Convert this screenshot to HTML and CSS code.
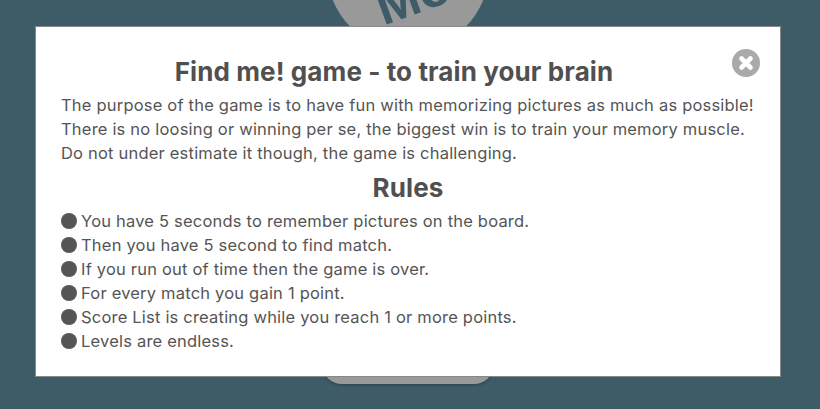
FILE: index.html
```html
<!DOCTYPE html>
<html lang="en">
<head>
  <meta charset="UTF-8" />
  <meta name="viewport" content="width=device-width, initial-scale=1.0"/>
  <title>Find me! game</title>
  <link rel="stylesheet" href="styles.css">
</head>
<body>

<div class="page">
  <div class="logo"><span class="logo-text">Mo</span></div>
  <div class="start-btn"></div>
</div>

<div class="overlay">
  <div class="modal">
    <svg class="close" viewBox="0 0 28 28" aria-label="Close">
      <circle cx="14" cy="14" r="14" fill="#aaaaaa"/>
      <path d="M9.5 9.5L18.500 18.500M18.500 9.500L9.500 18.500" stroke="#fff" stroke-width="4.6" stroke-linecap="round"/>
    </svg>

    <h2 class="title">Find me! game - to train your brain</h2>
    <p>The purpose of the game is to have fun with memorizing pictures as much as possible!<br>
    There is no loosing or winning per se, the biggest win is to train your memory muscle.<br>
    Do not under estimate it though, the game is challenging.</p>

    <h2 class="rules-title">Rules</h2>
    <ul class="rules">
      <li>You have 5 seconds to remember pictures on the board.</li>
      <li>Then you have 5 second to find match.</li>
      <li>If you run out of time then the game is over.</li>
      <li>For every match you gain 1 point.</li>
      <li>Score List is creating while you reach 1 or more points.</li>
      <li>Levels are endless.</li>
    </ul>
  </div>
</div>

</body>
</html>
```

FILE: styles.css
```css
html, body {
  height: 100%;
}

body {
  margin: 0;
  font-family: Inter, "Noto Sans", sans-serif;
  background: #3d5c68;
  color: #555;
  overflow: hidden;
}

.page {
  height: 409px;
  display: flex;
  flex-direction: column;
  align-items: center;
  overflow: hidden;
}

.logo {
  flex: none;
  width: 162px;
  height: 162px;
  margin-top: -111px;
  margin-left: -4px;
  border-radius: 50%;
  background: #999;
  display: flex;
  align-items: center;
  justify-content: center;
  overflow: hidden;
}

.logo-text {
  font-family: "Liberation Sans", sans-serif;
  font-weight: 700;
  font-size: 52px;
  color: #3d5c68;
  transform: translate(5px, 26px) rotate(-20deg);
}

.start-btn {
  flex: none;
  width: 172px;
  height: 50px;
  margin-top: 283px;
  margin-left: -4px;
  border-radius: 20px;
  background: #999;
  box-shadow: 0 1px 3px rgba(0, 0, 0, 0.3);
}

.overlay {
  position: fixed;
  top: 0;
  left: 0;
  right: 0;
  bottom: 0;
}

.modal {
  position: relative;
  box-sizing: border-box;
  width: 746px;
  height: 351px;
  margin: 26px 0 0 35px;
  padding: 29px 25px 0;
  background: #fff;
  border: 1px solid #888;
}

.close {
  position: absolute;
  top: 22px;
  right: 20px;
  width: 28px;
  height: 28px;
}

h2 {
  margin: 0;
  text-align: center;
  font-size: 26px;
  line-height: 32px;
  font-weight: 700;
  letter-spacing: 0.1px;
  color: #505050;
}

/* leaves room for the close button, so the title sits left of centre */
.title {
  padding-right: 28px;
}

p {
  margin: 5px 0 0;
  font-size: 16.500px;
  line-height: 24px;
  letter-spacing: 0.2px;
  white-space: nowrap;
}

.rules-title {
  margin-top: 7px;
}

.rules {
  margin: 5px 0 0;
  padding: 0;
  list-style: none;
  font-size: 16.500px;
  line-height: 24px;
  letter-spacing: 0.2px;
}

.rules li {
  display: flex;
  align-items: center;
  gap: 4px;
  white-space: nowrap;
}

.rules li::before {
  content: "";
  width: 16px;
  height: 16px;
  border-radius: 50%;
  background: #555;
}
```
